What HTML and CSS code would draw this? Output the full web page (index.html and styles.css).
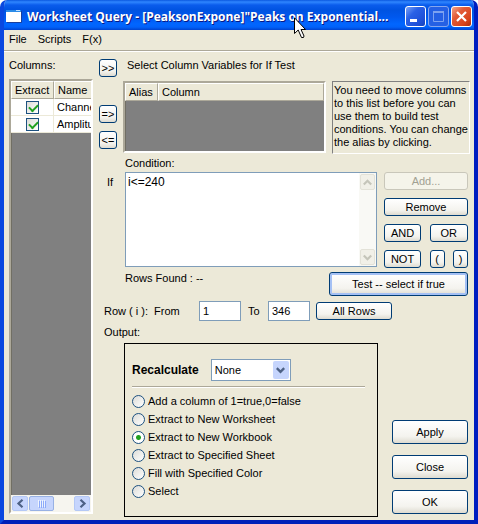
FILE: index.html
```html
<!DOCTYPE html>
<html lang="en">
<head>
<meta charset="utf-8">
<title>Worksheet Query</title>
<link rel="stylesheet" href="styles.css">
</head>
<body>
<div class="window">
  <header class="titlebar">
    <svg class="app-icon" width="16" height="14" viewBox="0 0 16 14" aria-hidden="true">
      <rect x="0" y="0" width="15" height="12" fill="#fff"/>
      <rect x="0" y="0" width="15" height="2" fill="#2b8be8"/>
      <rect x="10" y="0" width="4" height="1" fill="#bfe0ff"/>
      <path d="M15.500 1V12.500H1" fill="none" stroke="#1a3f9c"/>
    </svg>
    <h1 class="title">Worksheet Query - [PeaksonExpone]"Peaks on Exponential...</h1>
    <div class="controls">
      <button class="control" type="button" aria-label="Minimize"><svg width="19" height="19" viewBox="0 0 19 19"><rect x="4" y="12" width="7" height="3" fill="#fff"/></svg></button>
      <button class="control control-off" type="button" aria-label="Maximize" disabled><svg width="19" height="19" viewBox="0 0 19 19"><path d="M4.500 5V14.500H14.500V5M4 5H15" fill="none" stroke="#7da2f0"/><rect x="4" y="4" width="11" height="2" fill="#7da2f0"/></svg></button>
      <button class="control control-close" type="button" aria-label="Close window"><svg width="19" height="19" viewBox="0 0 19 19"><path d="M5 5L14 14M14 5L5 14" stroke="#fff" stroke-width="2.200"/></svg></button>
    </div>
    <svg class="pointer" width="13" height="22" viewBox="0 0 13 22" aria-hidden="true">
      <path d="M.5 .8V16.500L4.200 13L7.500 20.500H9.500L10 19L7 12.500H11.500Z" fill="#fff" stroke="#000"/>
    </svg>
  </header>

  <nav class="menu">
    <a href="#file">File</a>
    <a href="#scripts">Scripts</a>
    <a href="#fx">F(x)</a>
  </nav>

  <main class="main">
    <section class="columns">
      <h2 class="label">Columns:</h2>
      <div class="sunken columns-frame">
        <div class="columns-view">
          <table class="grid">
            <thead><tr><th class="col-extract">Extract</th><th class="col-name">Name</th></tr></thead>
            <tbody>
              <tr><td class="center"><input class="check" type="checkbox" checked aria-label="Extract Channel"></td><td>Channel</td></tr>
              <tr><td class="center"><input class="check" type="checkbox" checked aria-label="Extract Amplitude"></td><td>Amplitude</td></tr>
            </tbody>
          </table>
        </div>
        <div class="hscroll">
          <button class="scroll-btn" type="button" aria-label="Scroll left"><svg width="9" height="9" viewBox="0 0 9 9"><path d="M6.500 .8L2.500 4.500L6.500 8.200" fill="none" stroke="#4d6185" stroke-width="2.200"/></svg></button>
          <div class="thumb"><svg width="8" height="8" viewBox="0 0 8 8"><path d="M.5 0V7M2.500 0V7M4.500 0V7M6.500 0V7" stroke="#eef4fe"/><path d="M1.500 1V8M3.500 1V8M5.500 1V8M7.500 1V8" stroke="#8caafa"/></svg></div>
          <button class="scroll-btn scroll-end" type="button" aria-label="Scroll right"><svg width="9" height="9" viewBox="0 0 9 9"><path d="M2.500 .8L6.500 4.500L2.500 8.200" fill="none" stroke="#4d6185" stroke-width="2.200"/></svg></button>
        </div>
      </div>
    </section>

    <div class="query">
      <div class="row-heading">
        <button class="btn btn-move" type="button">&gt;&gt;</button>
        <h2 class="label">Select Column Variables for If Test</h2>
      </div>

      <div class="row-variables">
        <div class="moves">
          <button class="btn btn-move" type="button">=&gt;</button>
          <button class="btn btn-move" type="button">&lt;=</button>
        </div>
        <div class="sunken variables">
          <table class="grid">
            <thead><tr><th class="col-alias">Alias</th><th>Column</th></tr></thead>
          </table>
        </div>
        <p class="hint">You need to move columns<br>to this list before you can<br>use them to build test<br>conditions. You can change<br>the alias by clicking.</p>
      </div>

      <div class="row-condition">
        <span class="if">If</span>
        <div class="condition">
          <label class="label" for="condition">Condition:</label>
          <div class="editor">
            <textarea id="condition" spellcheck="false">i&lt;=240</textarea>
            <div class="vscroll">
              <span class="vscroll-btn"><svg width="9" height="7" viewBox="0 0 9 7"><path d="M.8 5.500L4.500 1.800L8.200 5.500" fill="none" stroke="#c5c5ba" stroke-width="2.200"/></svg></span>
              <span class="vscroll-btn"><svg width="9" height="7" viewBox="0 0 9 7"><path d="M.8 1.500L4.500 5.200L8.200 1.500" fill="none" stroke="#c5c5ba" stroke-width="2.200"/></svg></span>
            </div>
          </div>
        </div>
        <div class="operators">
          <button class="btn wide" type="button" disabled>Add...</button>
          <button class="btn wide" type="button">Remove</button>
          <button class="btn" type="button">AND</button>
          <button class="btn double" type="button">OR</button>
          <button class="btn" type="button">NOT</button>
          <button class="btn" type="button">(</button>
          <button class="btn" type="button">)</button>
        </div>
      </div>

      <div class="row-test">
        <span class="label">Rows Found : --</span>
        <button class="btn btn-default" type="button">Test -- select if true</button>
      </div>

      <div class="row-range">
        <label class="range-from" for="from">Row ( i ):&nbsp; From</label>
        <input class="field" id="from" type="text" value="1">
        <label class="range-to" for="to">To</label>
        <input class="field" id="to" type="text" value="346">
        <button class="btn btn-all" type="button">All Rows</button>
      </div>

      <h2 class="label output-label">Output:</h2>

      <div class="row-output">
        <div class="output">
          <div class="recalc">
            <label class="recalc-label" for="recalc">Recalculate</label>
            <div class="select">
              <select id="recalc"><option>None</option></select>
              <span class="select-arrow"><svg width="9" height="7" viewBox="0 0 9 7"><path d="M.8 1.200L4.500 4.800L8.200 1.200" fill="none" stroke="#4d6185" stroke-width="2.400"/></svg></span>
            </div>
          </div>
          <hr class="rule">
          <div class="options">
            <label class="option"><input type="radio" name="output">Add a column of 1=true,0=false</label>
            <label class="option"><input type="radio" name="output">Extract to New Worksheet</label>
            <label class="option"><input type="radio" name="output" checked>Extract to New Workbook</label>
            <label class="option"><input type="radio" name="output">Extract to Specified Sheet</label>
            <label class="option"><input type="radio" name="output">Fill with Specified Color</label>
            <label class="option"><input type="radio" name="output">Select</label>
          </div>
        </div>
        <div class="actions">
          <button class="btn btn-action" type="button">Apply</button>
          <button class="btn btn-action" type="button">Close</button>
          <button class="btn btn-action" type="button">OK</button>
        </div>
      </div>
    </div>
  </main>
</div>
</body>
</html>
```
FILE: styles.css
```css
* { box-sizing: border-box; }

body {
  margin: 0;
  background: #fff;
  color: #000;
  font: 11px/13px "Liberation Sans", Arial, sans-serif;
}

button, input, select, textarea { font: inherit; color: inherit; }
h1, h2, p { margin: 0; font: inherit; }
svg { display: block; }

.window {
  display: flex;
  flex-direction: column;
  min-height: 100vh;
  border: 4px solid #0a48e0;
  border-top: 0;
  border-color: #0a48e0 #001dc0 #0020b8 #0a48e0;
  border-radius: 7px 7px 0 0;
  background: #ece9d8;
  overflow: hidden;
}

/* Title bar */
.titlebar {
  position: relative;
  display: flex;
  align-items: center;
  gap: 5px;
  height: 30px;
  margin: 0 -4px;
  padding: 3px 6px 0;
  background: linear-gradient(#0a58e0 0, #2f86ff 2px, #0a5cec 5px, #0053e1 10px, #0058ee 17px, #0166ff 24px, #0162fa 27px, #0043cf 30px);
}
.title {
  flex: 1;
  min-width: 0;
  color: #fff;
  font: bold 12px/18px "Open Sans", "Noto Sans", sans-serif;
  text-shadow: 1px 1px #0a1883;
  white-space: nowrap;
}
.controls { display: flex; gap: 2px; }
.control {
  width: 21px;
  height: 21px;
  padding: 0;
  border: 1px solid #fff;
  border-radius: 3px;
  background: linear-gradient(135deg, #7ba2f5, #2a61e6 35%, #1f50d8 75%, #1743b8);
}
.control-off { border-color: #85a6ee; background: #2560e4; }
.control-close { background: linear-gradient(135deg, #f2a48a, #e25b38 35%, #d9441c 75%, #a92c0c); }
.pointer { position: absolute; left: 294px; top: 17px; }

/* Menu */
.menu {
  display: flex;
  gap: 11px;
  height: 22px;
  padding: 3px 5px;
  border-bottom: 1px solid #fff;
  box-shadow: inset 0 -1px #aca899;
}
.menu a { color: inherit; text-decoration: none; }

/* Layout */
.main { display: flex; flex: 1; gap: 6px; padding: 7px 4px 3px 5px; }
.label { display: block; white-space: nowrap; }

.columns { display: flex; flex-direction: column; width: 84px; gap: 7px; padding-bottom: 3px; }
.sunken {
  border: 2px solid;
  border-color: #aca899 #fff #fff #aca899;
  background: #808080;
  box-shadow: inset 1px 1px #716f64;
  overflow: hidden;
}
.columns-frame { display: flex; flex: 1; flex-direction: column; }
.columns-view { flex: 1; overflow: hidden; }

.grid { width: 100%; border-collapse: separate; border-spacing: 0; table-layout: fixed; }
.grid th {
  height: 18px;
  padding: 0 0 0 3px;
  border: 1px solid;
  border-color: #fff #aca899 #aca899 #fff;
  background: #ece9d8;
  font-weight: normal;
  text-align: left;
}
.grid td {
  height: 17px;
  padding: 0 0 0 3px;
  border-right: 1px solid #ece9d8;
  border-bottom: 1px solid #ece9d8;
  background: #fff;
}
.grid .center { padding: 0; text-align: center; }
.columns .grid { width: 120px; }
.col-extract { width: 43px; }
.col-alias { width: 33px; }

.check {
  appearance: none;
  display: block;
  width: 13px;
  height: 13px;
  margin: 0 auto;
  border: 1px solid #1c5180;
  background: linear-gradient(135deg, #dcdcd7, #fff);
}
.check:checked::before {
  content: "";
  display: block;
  width: 7px;
  height: 4px;
  margin: 2px;
  border: solid #21a121;
  border-width: 0 0 2px 2px;
  transform: rotate(-45deg);
}

.hscroll { display: flex; gap: 1px; height: 17px; padding: 1px; background: #f6f5ef; }
.scroll-btn, .thumb {
  display: flex;
  align-items: center;
  justify-content: center;
  width: 16px;
  padding: 0;
  border: 1px solid #b4c8f6;
  border-radius: 2px;
  background: #c6d5fd;
}
.thumb { width: 25px; border-color: #98b1e4; }
.scroll-end { margin-left: auto; }

.query { display: flex; flex: 1; flex-direction: column; min-width: 0; }

/* Buttons */
.btn {
  height: 18px;
  padding: 0;
  border: 1px solid #003c74;
  border-radius: 3px;
  background: linear-gradient(#fff, #f4f3ee 70%, #dedbd0);
  white-space: nowrap;
}
.btn:disabled { border-color: #c9c7ba; background: #f5f4ea; color: #a1a192; }
.btn-move { width: 18px; }
.btn-default { height: 24px; box-shadow: inset 0 0 0 2px #a4c0f4; }

/* Query */
.row-heading { display: flex; gap: 10px; }
.row-variables { display: flex; gap: 6px; margin-top: 4px; }
.moves { display: flex; flex-direction: column; gap: 8px; padding-top: 24px; }
.variables { flex: 1; height: 72px; }
.hint {
  width: 138px;
  height: 73px;
  padding: 2px 1px;
  border: 1px solid;
  border-color: #808080 #fff #fff #808080;
  white-space: nowrap;
}

.row-condition { display: flex; gap: 7px; margin-top: 3px; padding-right: 2px; }
.if { width: 19px; padding: 19px 0 0 8px; }
.condition { display: flex; flex: 1; flex-direction: column; gap: 2px; }
.editor { display: flex; height: 95px; border: 1px solid #7f9db9; background: #fff; }
.editor textarea {
  flex: 1;
  min-width: 0;
  padding: 3px 2px;
  border: 0;
  outline: 0;
  background: none;
  font-size: 12px;
  resize: none;
  overflow: hidden;
}
.vscroll { display: flex; flex-direction: column; justify-content: space-between; width: 17px; padding: 1px; background: #f9f9f5; }
.vscroll-btn {
  display: flex;
  align-items: center;
  justify-content: center;
  height: 16px;
  border: 1px solid #e3e2d8;
  border-radius: 2px;
  background: #f1f0e8;
}
.operators {
  display: grid;
  grid-template-columns: 37px 15px 15px;
  column-gap: 8px;
  row-gap: 8px;
  align-content: start;
  justify-content: space-between;
  width: 84px;
  padding-top: 15px;
}
.operators .wide { grid-column: 1 / -1; }
.operators .double { grid-column: 2 / -1; }

.row-test { display: flex; justify-content: space-between; margin-top: 4px; padding: 0 2px 0 26px; }
.btn-default { width: 139px; }

.row-range { display: flex; align-items: center; margin-top: 5px; padding-left: 5px; }
.range-from { width: 95px; }
.range-to { width: 27px; padding-left: 7px; }
.field { width: 42px; height: 20px; padding: 0 3px; border: 1px solid #7f9db9; background: #fff; }
.btn-all { width: 76px; margin-left: 6px; }

.output-label { margin-top: 5px; padding-left: 5px; }
.row-output { display: flex; flex: 1; gap: 14px; margin-top: 4px; padding: 0 2px 0 25px; }
.output { flex: 1; padding: 15px 12px 8px 7px; border: 1px solid #000; }
.recalc { display: flex; align-items: center; gap: 12px; }
.recalc-label { font-size: 12px; font-weight: bold; }
.select { position: relative; width: 80px; height: 22px; border: 1px solid #7f9db9; background: #fff; }
.select select { appearance: none; width: 100%; height: 20px; padding: 0 3px; border: 0; background: none; }
.select-arrow {
  position: absolute;
  top: 1px;
  right: 1px;
  display: flex;
  align-items: center;
  justify-content: center;
  width: 16px;
  height: 18px;
  border-radius: 2px;
  background: #c6d5fd;
  pointer-events: none;
}
.rule { height: 2px; margin: 5px 0 4px; border: 0; border-top: 1px solid #aca899; background: #fff; }
.option { display: flex; align-items: center; gap: 3px; height: 18px; white-space: nowrap; }
.option input {
  appearance: none;
  width: 13px;
  height: 13px;
  margin: 0;
  border: 1px solid #1c5180;
  border-radius: 50%;
  background: linear-gradient(135deg, #dcdcd7, #fff);
}
.option input:checked { background: radial-gradient(circle, #21a121 0 2px, #fff 3px); }

.actions { display: flex; flex-direction: column; justify-content: flex-end; gap: 11px; width: 76px; padding-bottom: 3px; }
.btn-action { height: 24px; }
```
